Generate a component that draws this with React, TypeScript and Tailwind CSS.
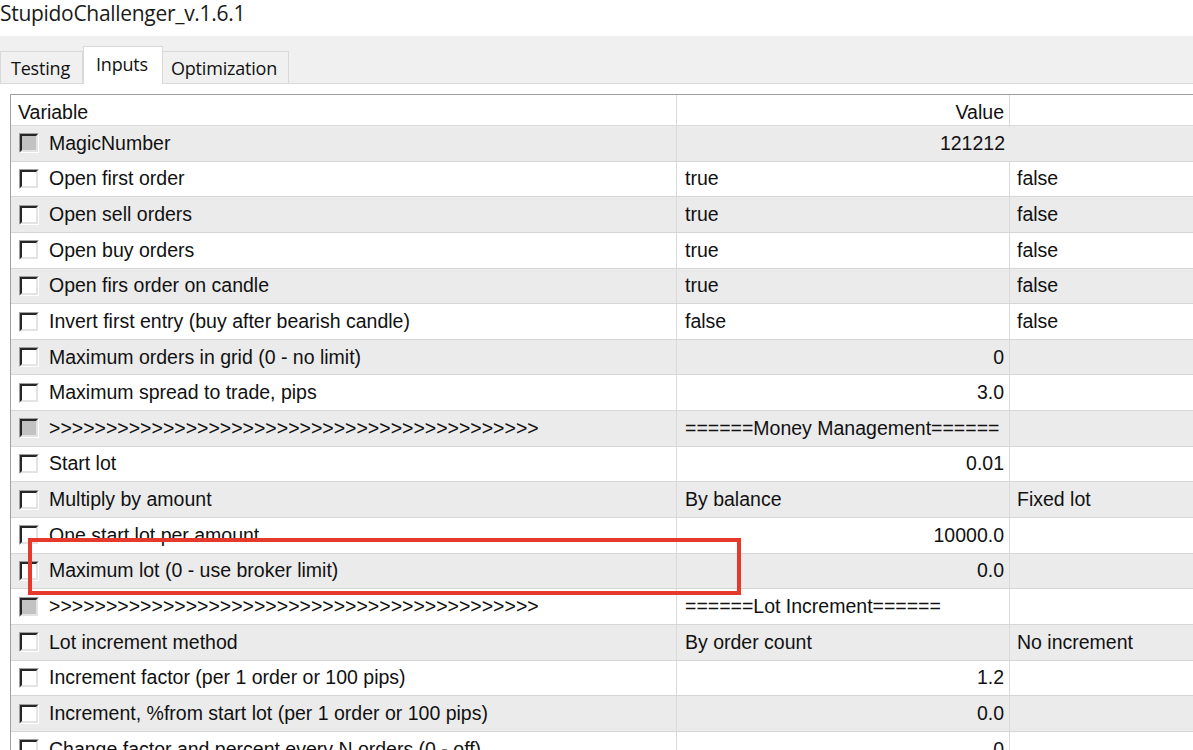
import React from "react";

type Row = {
  name: string;
  v1?: string;
  v2?: string;
  right?: boolean;
  disabled?: boolean;
  noSplit?: boolean;
};

const arrows = ">".repeat(43);

const rows: Row[] = [
  { name: "MagicNumber", v1: "121212", right: true, disabled: true, noSplit: true },
  { name: "Open first order", v1: "true", v2: "false" },
  { name: "Open sell orders", v1: "true", v2: "false" },
  { name: "Open buy orders", v1: "true", v2: "false" },
  { name: "Open firs order on candle", v1: "true", v2: "false" },
  { name: "Invert first entry (buy after bearish candle)", v1: "false", v2: "false" },
  { name: "Maximum orders in grid (0 - no limit)", v1: "0", right: true },
  { name: "Maximum spread to trade, pips", v1: "3.0", right: true },
  { name: arrows, v1: "======Money Management======", disabled: true },
  { name: "Start lot", v1: "0.01", right: true },
  { name: "Multiply by amount", v1: "By balance", v2: "Fixed lot" },
  { name: "One start lot per amount", v1: "10000.0", right: true },
  { name: "Maximum lot (0 - use broker limit)", v1: "0.0", right: true },
  { name: arrows, v1: "======Lot Increment======", disabled: true },
  { name: "Lot increment method", v1: "By order count", v2: "No increment" },
  { name: "Increment factor (per 1 order or 100 pips)", v1: "1.2", right: true },
  { name: "Increment, %from start lot (per 1 order or 100 pips)", v1: "0.0", right: true },
  { name: "Change factor and percent every N orders (0 - off)", v1: "0", right: true },
];

function Check({ disabled }: { disabled?: boolean }) {
  return (
    <div className="w-[20px] h-[20px] shrink-0 border border-t-[#a0a0a0] border-l-[#a0a0a0] border-r-white border-b-white">
      <div
        className={
          "w-full h-full border-[2.5px] border-t-[#262626] border-l-[#262626] border-r-[#e3e3e3] border-b-[#e3e3e3] " +
          (disabled ? "bg-[#c2c2c2]" : "bg-white")
        }
      />
    </div>
  );
}

export default function App() {
  return (
    <div className="relative w-[1193px] h-[750px] overflow-hidden bg-white text-[#111]">
      <div className="h-[36px] pt-[1px] leading-[24px] text-[21px] text-[#1a1a1a] tracking-[-0.3px]" style={{ fontFamily: '"Open Sans", sans-serif' }}>
        StupidoChallenger_v.1.6.1
      </div>

      <div className="h-[48px] bg-[#f0f0f0] flex items-end border-b border-[#d9d9d9] text-[18px]" style={{ fontFamily: '"Open Sans", sans-serif' }}>
        <div className="h-[32px] w-[83px] border border-b-0 border-[#d9d9d9] bg-[#f0f0f0] flex items-center pl-[10px] pt-[2px] tracking-[-0.2px]">Testing</div>
        <div className="h-[38px] w-[80px] border border-b-0 border-[#d9d9d9] bg-white flex items-center pl-[12px] -mb-px pb-[3px] tracking-[-0.2px]">Inputs</div>
        <div className="h-[32px] w-[126px] border border-b-0 border-l-0 border-[#d9d9d9] bg-[#f0f0f0] flex items-center pl-[8px] pt-[2px] tracking-[-0.2px]">Optimization</div>
      </div>

      <div className="pt-[10px] pl-[10px]">
        <div className="border-t border-l border-[#a0a0a0] text-[19.5px]" style={{ fontFamily: '"Liberation Sans", Arial, sans-serif' }}>
          <div className="grid grid-cols-[666px_333px_1fr] h-[31px] border-b border-[#dadada]">
            <div className="border-r border-[#dadada] flex items-center pl-[7px] pt-[3px]">Variable</div>
            <div className="border-r border-[#dadada] flex items-center justify-end pr-[5px] pt-[3px]">Value</div>
            <div />
          </div>
          {rows.map((r, i) => (
            <div
              key={i}
              className={
                "grid grid-cols-[666px_333px_1fr] h-[35.65px] border-b border-[#d6d6d6] " +
                (i % 2 === 0 ? "bg-[#ebebeb]" : "bg-white")
              }
            >
              <div className="border-r border-[#dadada] flex items-center pl-[8px] gap-[10px] whitespace-nowrap overflow-hidden">
                <Check disabled={r.disabled} />
                <span>{r.name}</span>
              </div>
              <div
                className={
                  "flex items-center whitespace-nowrap " +
                  (r.noSplit ? "" : "border-r border-[#dadada] ") +
                  (r.right ? "justify-end pr-[5px]" : "pl-[8px]")
                }
              >
                {r.v1}
              </div>
              <div className="flex items-center pl-[7px] whitespace-nowrap">{r.v2}</div>
            </div>
          ))}
        </div>
      </div>

      <div className="absolute left-[28px] top-[538px] w-[713px] h-[57px] border-[4px] border-[#e5392b]" />
    </div>
  );
}
